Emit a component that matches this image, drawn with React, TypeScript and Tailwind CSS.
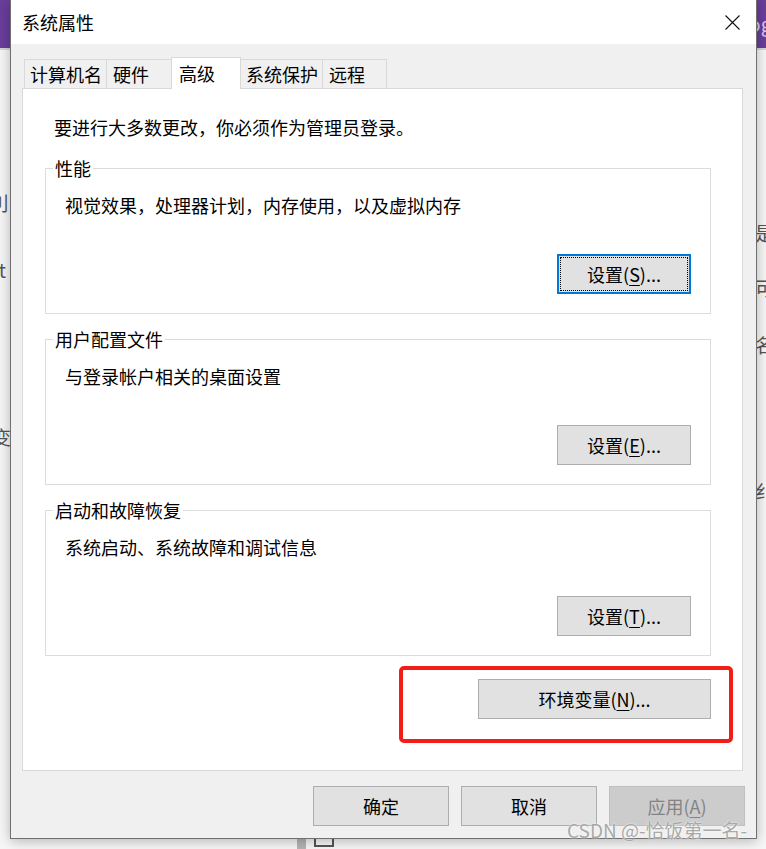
import React from 'react';

const FONT = "font-['Noto_Sans_CJK_SC','Microsoft_YaHei',sans-serif]";

function CloseIcon() {
  return (
    <svg width="15" height="15" viewBox="0 0 15 15" fill="none" stroke="#111" strokeWidth={1.1}>
      <path d="M0.5 0.5l14 14M14.5 0.5l-14 14" />
    </svg>
  );
}

function Button({
  label,
  mnemonic,
  rest,
  width,
  focused,
  disabled,
}: {
  label: string;
  mnemonic?: string;
  rest?: string;
  width: string;
  focused?: boolean;
  disabled?: boolean;
}) {
  const text = (
    <span className={disabled ? 'text-[#838383]' : 'text-black'}>
      {label}
      {mnemonic && (
        <>
          (<u className="underline-offset-[3px]">{mnemonic}</u>){rest}
        </>
      )}
    </span>
  );

  if (focused) {
    return (
      <div className={`${width} h-[40px] border-2 border-[#0078d7] bg-[#e1e1e1] p-px flex`}>
        <div className="flex-1 border border-dotted border-black flex items-center justify-center text-[18px] leading-none">
          {text}
        </div>
      </div>
    );
  }

  return (
    <div
      className={`${width} h-[40px] border flex items-center justify-center text-[18px] leading-none ${
        disabled ? 'bg-[#cccccc] border-[#bfbfbf]' : 'bg-[#e1e1e1] border-[#adadad]'
      }`}
    >
      {text}
    </div>
  );
}

function Group({
  title,
  desc,
  children,
}: {
  title: string;
  desc: string;
  children: React.ReactNode;
}) {
  return (
    <div className="relative h-[146px] border border-[#dcdcdc] flex flex-col px-[19px] pt-[24px] pb-[19px]">
      {/* legend sits on the top border */}
      <span className="absolute left-[7px] top-[-13px] bg-white px-[2px] text-[18px] leading-[24px] text-black">
        {title}
      </span>
      <p className="text-[18px] leading-[24px] text-black">{desc}</p>
      <div className="mt-auto flex justify-end">{children}</div>
    </div>
  );
}

const TABS = [
  { name: '计算机名', w: 'w-[83px]', pl: 'pl-[5px]' },
  { name: '硬件', w: 'w-[66px]', pl: 'pl-[6px]' },
  { name: '高级', w: 'w-[70px]', pl: 'pl-[7px]', active: true },
  { name: '系统保护', w: 'w-[83px]', pl: 'pl-[5px]' },
  { name: '远程', w: 'w-[65px]', pl: 'pl-[6px]' },
];

export default function App() {
  return (
    <div className={`relative w-[766px] h-[849px] overflow-hidden bg-[#f2f2f2] ${FONT}`}>
      {/* desktop behind the dialog */}
      <div className="flex flex-col h-full">
        <div className="h-[48px] bg-[#6a3d9c] flex justify-end items-center">
          <span className="text-[20px] leading-none text-[#d9cdea] mr-[-6px]">og</span>
        </div>
        <div className="h-[2px] bg-[#d6d6d6]" />
        <div className="flex-1 flex justify-between bg-[#f7f7f7]">
          <div className="w-[10px] flex flex-col text-[19px] leading-none text-[#555] overflow-hidden">
            <span className="mt-[143px] ml-[-10px]">刂</span>
            <span className="mt-[48px] ml-[-9px]">/t</span>
            <span className="mt-[148px] ml-[-8px]">变</span>
          </div>
          <div className="w-[10px] flex flex-col text-[19px] leading-none text-[#555] overflow-hidden">
            <span className="mt-[173px] ml-[-1px]">是</span>
            <span className="mt-[36px] ml-[-1px]">可</span>
            <span className="mt-[38px] ml-[-1px]">名</span>
            <span className="mt-[127px] ml-[-1px]">纟</span>
          </div>
        </div>
      </div>
      <div className="absolute left-[297px] top-[839px] flex gap-[8px]">
        <div className="w-[9px] h-[12px] bg-[#b5b5b5]" />
        <div className="w-[20px] h-[8px] border-2 border-[#555] border-t-0" />
      </div>

      {/* dialog window */}
      <div className="absolute left-[10px] top-0 w-[747px] h-[839px] border-x border-b border-[#707070] bg-[#f0f0f0] shadow-[0_2px_12px_rgba(0,0,0,0.28)] flex flex-col">
        <div className="h-[44px] bg-white flex items-center justify-between pl-[11px] pr-[16px]">
          <span className="text-[18px] leading-none text-black">系统属性</span>
          <CloseIcon />
        </div>

        {/* tabs */}
        <div className="mt-[13px] ml-[13px] h-[31px] flex items-end relative z-10">
          {TABS.map((t) => (
            <div
              key={t.name}
              className={`${t.w} ${t.pl} flex items-center text-[18px] leading-none text-black border-x border-t border-[#d9d9d9] -ml-px first:ml-0 ${
                t.active ? 'h-[32px] mb-[-1px] bg-white relative z-10 pb-[2px]' : 'h-[29px] bg-[#f0f0f0]'
              }`}
            >
              {t.name}
            </div>
          ))}
        </div>

        {/* tab page */}
        <div className="ml-[11px] w-[721px] h-[683px] border border-[#d9d9d9] bg-white pt-[26px]">
          <p className="pl-[31px] text-[18px] leading-[24px] text-black">
            要进行大多数更改，你必须作为管理员登录。
          </p>
          <div className="ml-[22px] w-[666px] mt-[29px] flex flex-col gap-[25px]">
            <Group title="性能" desc="视觉效果，处理器计划，内存使用，以及虚拟内存">
              <Button label="设置" mnemonic="S" rest="..." width="w-[134px]" focused />
            </Group>
            <Group title="用户配置文件" desc="与登录帐户相关的桌面设置">
              <Button label="设置" mnemonic="E" rest="..." width="w-[134px]" />
            </Group>
            <Group title="启动和故障恢复" desc="系统启动、系统故障和调试信息">
              <Button label="设置" mnemonic="T" rest="..." width="w-[134px]" />
            </Group>
          </div>
          <div className="ml-[22px] w-[666px] mt-[23px] flex justify-end relative">
            <Button label="环境变量" mnemonic="N" rest="..." width="w-[233px]" />
            {/* red highlight drawn over the screenshot */}
            <div className="absolute left-[354px] top-[-13px] w-[334px] h-[77px] border-[4px] border-[#f11d16] rounded-[5px]" />
          </div>
        </div>

        {/* dialog buttons */}
        <div className="mt-[15px] pr-[11px] flex justify-end gap-[12px]">
          <Button label="确定" width="w-[136px]" />
          <Button label="取消" width="w-[136px]" />
          <Button label="应用" mnemonic="A" width="w-[136px]" disabled />
        </div>
      </div>

      {/* watermark */}
      <span className="absolute left-[567px] top-[817px] text-[19px] leading-[26px] text-[#a9a9a9] [text-shadow:0_0_2px_#ffffff]">
        CSDN @-恰饭第一名-
      </span>
    </div>
  );
}
